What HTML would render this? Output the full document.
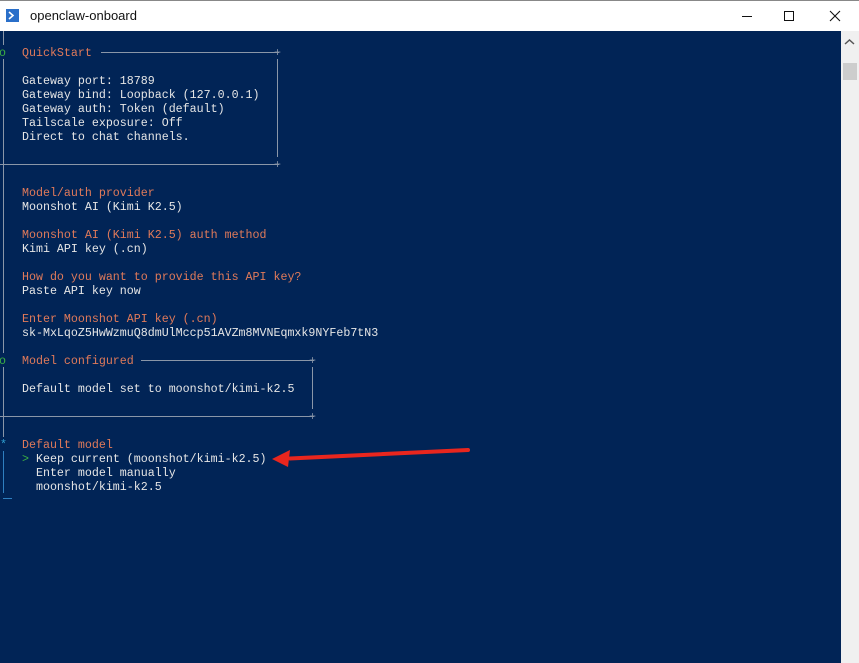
<!DOCTYPE html>
<html><head><meta charset="utf-8"><style>
*{margin:0;padding:0;box-sizing:border-box}
body{width:859px;height:663px;overflow:hidden;background:#fff;font-family:"Liberation Sans",sans-serif;position:relative}
#title{position:absolute;left:0;top:0;width:859px;height:31px;background:#fff;border-top:1px solid #888}
#title .t{position:absolute;left:30px;top:7px;font-size:13px;color:#111}
#con{position:absolute;left:0;top:31px;width:841px;height:632px;background:#012456}
#sb{position:absolute;left:841px;top:31px;width:18px;height:632px;background:#f0f0f0}
#thumb{position:absolute;left:843px;top:63px;width:14px;height:17px;background:#cdcdcd}
.l{position:absolute;font-family:"Liberation Mono",monospace;font-size:11.65px;line-height:14px;white-space:pre;color:#e6e6e6;margin-top:2px}
.o{color:#e07a5a}
.g{position:absolute;background:#8a96a8}
</style></head><body>
<div id="title">
<svg style="position:absolute;left:6px;top:8px" width="13" height="13" viewBox="0 0 13 13"><rect width="13" height="13" fill="#2a6fc9"/><path d="M3 3l4 3.5L3 10" stroke="#fff" stroke-width="1.6" fill="none"/></svg>
<span class="t">openclaw-onboard</span>
<div style="position:absolute;left:742px;top:15px;width:10px;height:1px;background:#111"></div>
<div style="position:absolute;left:784px;top:10px;width:10px;height:10px;border:1px solid #111"></div>
<svg style="position:absolute;left:829px;top:9px" width="12" height="12"><path d="M1 1L11 11M11 1L1 11" stroke="#111" stroke-width="1.1"/></svg>
</div>
<div id="con"></div>
<div id="sb"></div>
<svg style="position:absolute;left:844px;top:38px" width="11" height="8"><path d="M1 6L5.5 2L10 6" stroke="#555" stroke-width="1.5" fill="none"/></svg>
<div id="thumb"></div>

<div class="g" style="left:3px;top:31px;width:1px;height:14px"></div>
<div class="g" style="left:3px;top:59px;width:1px;height:126px"></div>
<div class="g" style="left:3px;top:185px;width:1px;height:168px"></div>
<div class="g" style="left:3px;top:367px;width:1px;height:70px"></div>
<div style="position:absolute;left:3px;top:451px;width:1px;height:42px;background:#2f7fc0"></div>
<div style="position:absolute;left:3px;top:498px;width:9px;height:1px;background:#2f7fc0"></div>

<div class="l" style="left:-1px;top:45px;color:#3cb043">o</div>
<div class="l o" style="left:22px;top:45px">QuickStart</div>
<div class="g" style="left:101px;top:52px;width:178px;height:1px"></div>
<div class="l" style="left:274px;top:45px;color:#8a96a8">+</div>
<div class="g" style="left:277px;top:59px;width:1px;height:98px"></div>
<div class="g" style="left:0;top:164px;width:279px;height:1px"></div>
<div class="l" style="left:274px;top:157px;color:#8a96a8">+</div>
<div class="l" style="left:22px;top:73px">Gateway port: 18789
Gateway bind: Loopback (127.0.0.1)
Gateway auth: Token (default)
Tailscale exposure: Off
Direct to chat channels.</div>

<div class="l" style="left:22px;top:185px"><span class="o">Model/auth provider</span>
Moonshot AI (Kimi K2.5)

<span class="o">Moonshot AI (Kimi K2.5) auth method</span>
Kimi API key (.cn)

<span class="o">How do you want to provide this API key?</span>
Paste API key now

<span class="o">Enter Moonshot API key (.cn)</span>
sk-MxLqoZ5HwWzmuQ8dmUlMccp51AVZm8MVNEqmxk9NYFeb7tN3</div>

<div class="l" style="left:-1px;top:353px;color:#3cb043">o</div>
<div class="l o" style="left:22px;top:353px">Model configured</div>
<div class="g" style="left:141px;top:360px;width:173px;height:1px"></div>
<div class="l" style="left:309px;top:353px;color:#8a96a8">+</div>
<div class="g" style="left:312px;top:367px;width:1px;height:42px"></div>
<div class="g" style="left:0;top:416px;width:314px;height:1px"></div>
<div class="l" style="left:309px;top:409px;color:#8a96a8">+</div>
<div class="l" style="left:22px;top:381px">Default model set to moonshot/kimi-k2.5</div>

<div class="l" style="left:0px;top:437px;color:#2f9fd0">*</div>
<div class="l" style="left:22px;top:437px"><span class="o">Default model</span>
<span style="color:#3cb043">&gt;</span> Keep current (moonshot/kimi-k2.5)
  Enter model manually
  moonshot/kimi-k2.5</div>

<svg style="position:absolute;left:270px;top:445px" width="205" height="25"><path d="M20 13.5L198 5" stroke="#e8261e" stroke-width="4" stroke-linecap="round"/><path d="M2 14L20 5L18 22Z" fill="#e8261e"/></svg>
</body></html>
